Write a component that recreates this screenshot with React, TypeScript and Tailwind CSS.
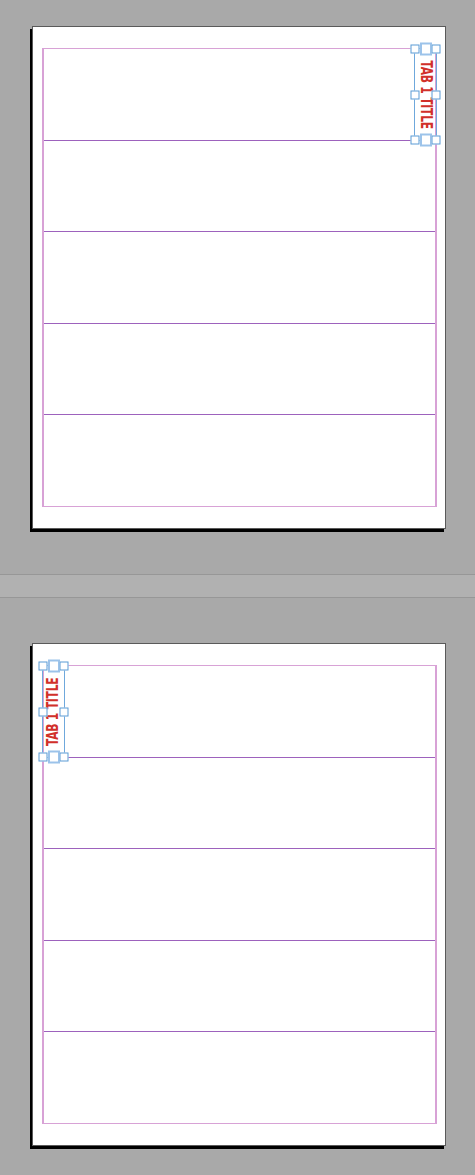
import React from 'react';

type Side = 'right' | 'left';

const Handle: React.FC<{ className: string; big?: boolean }> = ({ className, big }) => (
  <div
    className={
      'absolute bg-white ' +
      (big
        ? 'w-[12px] h-[13px] border-2 border-[#9cc3ea] -translate-x-1/2 -translate-y-1/2 '
        : 'w-[9px] h-[9px] border border-[#5b9bd5] -translate-x-1/2 -translate-y-1/2 ') +
      className
    }
  />
);

const TabFrame: React.FC<{ side: Side }> = ({ side }) => {
  const pos = side === 'right' ? 'right-[-2px]' : 'left-[-2px]';
  return (
    <div className={`absolute top-[-1px] ${pos} w-[23px] h-[93px] border border-[#6fa8dc]`}>
      <div className="absolute inset-0 flex items-center justify-center">
        <span
          className={
            'text-[#d1302a] font-bold text-[15px] leading-none tracking-[-0.3px] scale-y-[0.8] [writing-mode:vertical-rl] ' +
            (side === 'left' ? 'rotate-180' : '')
          }
          style={{ fontFamily: '"DejaVu Sans Condensed", "DejaVu Sans", sans-serif' }}
        >
          TAB 1 TITLE
        </span>
      </div>
      <Handle className="left-0 top-0" />
      <Handle className="left-1/2 top-0" big />
      <Handle className="left-full top-0" />
      <Handle className="left-0 top-1/2" />
      <Handle className="left-full top-1/2" />
      <Handle className="left-0 top-full" />
      <Handle className="left-1/2 top-full" big />
      <Handle className="left-full top-full" />
    </div>
  );
};

const Page: React.FC<{ side: Side }> = ({ side }) => (
  <div className="w-[414px] h-[503px] bg-white border border-[#5a5a5a] shadow-[-2px_3px_0_#000] pt-[21px] pl-[9px] pr-[8px] pb-[21px]">
    <div className="relative h-full flex flex-col border-x-2 border-y border-[#d8a2d6]">
      <div className="flex-1" />
      <div className="flex-1 border-t border-[#9d62bd]" />
      <div className="flex-1 border-t border-[#9d62bd]" />
      <div className="flex-1 border-t border-[#9d62bd]" />
      <div className="flex-1 border-t border-[#9d62bd]" />
      <TabFrame side={side} />
    </div>
  </div>
);

export default function App() {
  return (
    <div className="w-[475px] h-[1175px] bg-[#a9a9a9] overflow-hidden">
      <div className="h-[574px] pt-[26px] pl-[32px]">
        <Page side="right" />
      </div>
      <div className="h-[24px] bg-[#b1b1b1] border-y border-[#979797]" />
      <div className="pt-[45px] pl-[32px]">
        <Page side="left" />
      </div>
    </div>
  );
}
